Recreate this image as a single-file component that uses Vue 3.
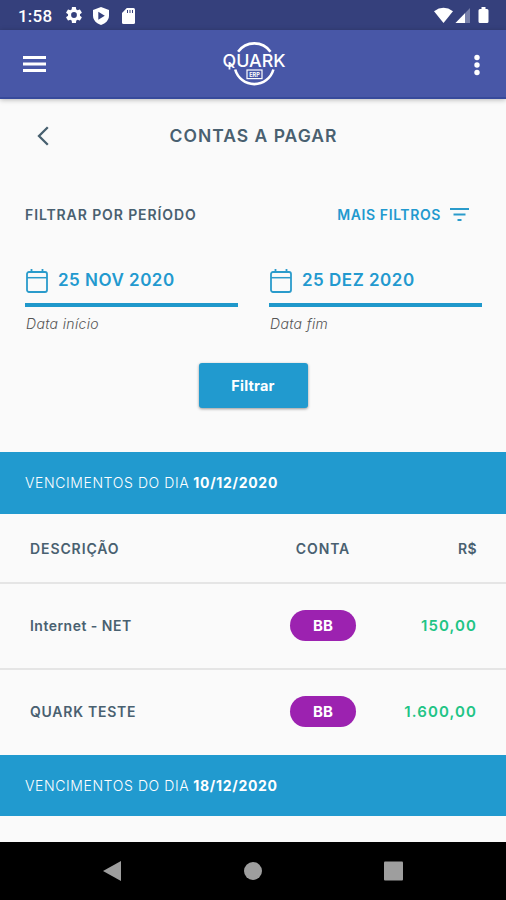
<script setup>
const dates = [
  { value: '25 NOV 2020', hint: 'Data início' },
  { value: '25 DEZ 2020', hint: 'Data fim' },
]
const bills = [
  { name: 'Internet - NET', account: 'BB', amount: '150,00', cls: 'net' },
  { name: 'QUARK TESTE', account: 'BB', amount: '1.600,00', cls: 'quark' },
]
</script>

<template>
  <div class="screen">
    <header class="status">
      <span class="clock">1:58</span>
      <svg class="gear" viewBox="2 2 20 20"><path fill="#fff" fill-rule="evenodd" d="M19.4 13c.1-.3.1-.6.1-1s0-.7-.1-1l2.1-1.6c.2-.2.3-.4.1-.7l-2-3.4c-.1-.2-.4-.3-.6-.2l-2.5 1a7 7 0 0 0-1.7-1l-.4-2.6c0-.3-.2-.5-.5-.5h-4c-.2 0-.4.2-.5.4l-.3 2.7a7 7 0 0 0-1.7 1l-2.5-1c-.2-.1-.5 0-.6.2l-2 3.4c-.2.3-.1.5.1.7L4.600 11a7 7 0 0 0 0 2l-2.200 1.600c-.2.2-.3.4-.1.7l2 3.400c.1.2.4.3.6.2l2.500-1a7 7 0 0 0 1.700 1l.3 2.700c.1.2.3.4.6.4h4c.2 0 .4-.2.5-.4l.3-2.700a7 7 0 0 0 1.700-1l2.500 1c.2.1.5 0 .6-.2l2-3.400c.1-.3.1-.5-.1-.7zM12 15.600a3.600 3.600 0 1 1 0-7.200 3.600 3.600 0 0 1 0 7.200z" /></svg>
      <svg class="shield" viewBox="0 0 16 18"><path fill="#fff" d="M8 0 16 3v5.500c0 4.500-3.300 8-8 9.500-4.700-1.500-8-5-8-9.500V3z" /><path fill="#35407c" d="M5.300 4.800v8l6.500-4z" /></svg>
      <svg class="sd" viewBox="0 0 13 16"><path fill="#fff" d="M4.800 0H11.500Q13 0 13 1.500v13Q13 16 11.500 16h-10Q0 16 0 14.500V5z" /><path stroke="#35407c" stroke-width="1" d="M5.500 2v3M8 2v3M10.500 2v3" /></svg>
      <svg class="signals" viewBox="0 0 56 18">
        <path fill="#fff" d="M0 4.200Q9.500-2.500 19 4.200L9.500 16z" />
        <path fill="#7880aa" d="M36 1v15H21.500z" /><path fill="#fff" d="M31 6.200V16h-9.500z" />
        <path fill="#fff" d="M47.500 0h4v2H53q1.500 0 1.500 1.500v11Q54.500 16 53 16h-7q-1.500 0-1.500-1.500v-11Q44.500 2 46 2h1.500z" />
      </svg>
    </header>

    <nav class="appbar">
      <svg class="menu" viewBox="0 0 23 16"><path stroke="#fff" stroke-width="3" d="M0 1.500h23M0 8h23M0 14.500h23" /></svg>
      <svg class="logo" viewBox="0 0 66 46">
        <g fill="none" stroke="#fff" stroke-width="2.600">
          <path d="M16.100 10.800A19.800 19.800 0 0 1 48.500 10.800" />
          <path d="M13.200 28.500A19.800 19.800 0 0 0 51.400 28.500" />
          <path stroke-width="1.800" d="M7.500 21v7.500" />
          <rect x="25" y="29" width="15" height="8.600" stroke-width="1.200" />
        </g>
        <text x=".5" y="26" class="brand" textLength="63" lengthAdjust="spacingAndGlyphs">QUARK</text>
        <text x="27.200" y="35.600" class="erp" textLength="10.600" lengthAdjust="spacingAndGlyphs">ERP</text>
      </svg>
      <svg class="more" viewBox="0 0 6 22"><g fill="#fff"><circle cx="3" cy="3.500" r="2.700" /><circle cx="3" cy="11" r="2.700" /><circle cx="3" cy="18.500" r="2.700" /></g></svg>
    </nav>

    <main>
      <div class="title">
        <svg viewBox="0 0 12 20"><path fill="none" stroke="#47606f" stroke-width="2.300" d="M10.800 1.200 2 10l8.800 8.800" /></svg>
        <h1>CONTAS A PAGAR</h1>
      </div>
      <div class="filters">
        <span class="period">FILTRAR POR PERÍODO</span>
        <span class="link">MAIS FILTROS</span>
        <svg viewBox="0 0 19 13"><path stroke="#2a9bcb" stroke-width="2" d="M0 1h19M3.500 6.500h12M7.500 12h4" /></svg>
      </div>
      <div class="dates">
        <div v-for="d in dates" :key="d.value" class="date">
          <div class="field">
            <svg viewBox="0 0 22 24"><g fill="none" stroke="#2a9bcb"><rect x="1" y="3" width="20" height="20" rx="2" stroke-width="1.800" /><path stroke-width="1.500" d="M1 8.700h20" /><path stroke-width="1.800" d="M5.500 0v4M16.500 0v4" /></g></svg>
            <span>{{ d.value }}</span>
          </div>
          <em>{{ d.hint }}</em>
        </div>
      </div>
      <button class="submit">Filtrar</button>

      <h2 class="band"><span>VENCIMENTOS DO DIA</span><b>10/12/2020</b></h2>
      <div class="row head">
        <span class="desc">DESCRIÇÃO</span><span class="conta">CONTA</span><span class="money">R$</span>
      </div>
      <div v-for="b in bills" :key="b.name" class="row">
        <span class="name" :class="b.cls">{{ b.name }}</span>
        <span class="chip">{{ b.account }}</span>
        <span class="amount">{{ b.amount }}</span>
      </div>
      <h2 class="band last"><span>VENCIMENTOS DO DIA</span><b>18/12/2020</b></h2>
    </main>

    <footer class="keys">
      <svg viewBox="0 0 18 20"><path fill="#9e9e9e" d="M18 0v20L0 10z" /></svg>
      <svg viewBox="0 0 18 20"><circle cx="9" cy="10" r="9" fill="#9e9e9e" /></svg>
      <svg viewBox="0 0 19 20"><rect y=".5" width="19" height="19" rx="1" fill="#9e9e9e" /></svg>
    </footer>
  </div>
</template>

<style>
body { margin: 0; }
</style>

<style scoped>
* { box-sizing: border-box; }
.screen { width: 506px; height: 900px; display: flex; flex-direction: column; overflow: hidden; background: #fafafa; color: #496070; font-family: Inter, "Liberation Sans", sans-serif; font-weight: 600; white-space: nowrap; }
svg { display: block; flex: none; }
.status { height: 30px; flex: none; display: flex; align-items: center; padding: 0 16px 0 18px; background: #35407c; }
.clock { width: 48px; font: 500 17px/30px Roboto, sans-serif; letter-spacing: .2px; color: #fff; padding-top: 1px; }
.gear { width: 16px; height: 16px; }
.shield { width: 16px; height: 18px; margin-left: 11px; margin-top: 1px; }
.sd { width: 13px; height: 16px; margin-left: 13px; margin-top: 1px; }
.signals { width: 56px; height: 18px; margin-left: auto; margin-top: 2px; }
.appbar { position: relative; z-index: 1; height: 69px; flex: none; display: grid; grid-template-columns: 1fr 66px 1fr; align-items: center; padding: 0 26px 0 23px; background: #4857a7; border-bottom: 2px solid #374a9b; box-shadow: 0 1px 5px #0004; }
.menu { width: 23px; height: 16px; margin-top: 1px; }
.logo { width: 66px; height: 46px; overflow: visible; margin-left: 3px; }
.brand { font: 500 17.500px Inter, sans-serif; fill: #fff; }
.erp { font: 700 6px Inter, sans-serif; fill: #fff; }
.more { width: 6px; height: 22px; margin-top: 2px; justify-self: end; }
main { flex: 1; min-height: 0; display: flex; flex-direction: column; }
.title { height: 73px; flex: none; display: grid; grid-template-columns: 37px 1fr 37px; align-items: center; }
.title svg { width: 12px; height: 20px; margin-left: 37px; }
h1 { margin: 0; padding-left: 1px; text-align: center; font-size: 17.500px; font-weight: 600; letter-spacing: 1px; }
.filters { height: 84px; flex: none; display: flex; align-items: center; padding: 0 37px 0 25px; }
.period { font-size: 14px; letter-spacing: .9px; }
.link { margin-left: auto; font-size: 14px; letter-spacing: .6px; color: #2299cf; }
.filters svg { width: 19px; height: 13px; margin-left: 9px; }
.dates { display: grid; grid-template-columns: 213px 213px; gap: 31px; padding: 0 25px; height: 107px; flex: none; }
.date { display: flex; flex-direction: column; padding-top: 1px; }
.field { height: 50px; display: flex; align-items: center; gap: 10px; padding: 0 0 1px 1px; border-bottom: 4px solid #1f98cb; color: #2299cf; font-size: 17px; letter-spacing: .5px; }
.field svg { width: 22px; height: 24px; margin-top: 2px; }
em { margin-top: 7px; padding-left: 1px; font-size: 14px; line-height: 20px; font-weight: 300; letter-spacing: .35px; color: #555; }
.submit { align-self: center; width: 109px; height: 45px; flex: none; border: 0; border-radius: 3px; background: #219acf; color: #fff; font: 700 14.500px Inter, sans-serif; letter-spacing: .2px; box-shadow: 0 1px 3px #0006; }
.band { flex: none; height: 61px; margin: 0; display: flex; align-items: center; gap: 4px; padding-left: 25px; background: #219acf; color: #fff; font-size: 14px; font-weight: 300; letter-spacing: .6px; }
.submit + .band { margin-top: 44px; height: 62px; padding-bottom: 1px; }
.last { margin-top: 1px; }
.band b { font-weight: 700; letter-spacing: .7px; }
.row { height: 86px; flex: none; display: grid; grid-template-columns: 260px 66px 1fr; align-items: center; padding: 0 29px 1px 30px; font-size: 14px; letter-spacing: .48px; border-top: 2px solid #e5e5e5; }
.head { height: 68px; padding-bottom: 0; border: 0; letter-spacing: .9px; }
.conta { text-align: center; }
.money, .amount { text-align: right; }
.money { letter-spacing: .4px; }
.quark { letter-spacing: .75px; }
.chip { display: grid; place-items: center; height: 31px; border-radius: 16px; background: #9c22b0; color: #fff; font-weight: 700; font-size: 15px; letter-spacing: .2px; }
.amount { color: #21c485; font-weight: 600; font-size: 15px; letter-spacing: 1.100px; }
.keys { height: 58px; flex: none; display: flex; align-items: center; padding-left: 103px; background: #000; }
.keys svg { width: 18px; height: 20px; }
.keys svg + svg { margin-left: 123px; }
.keys svg:last-child { width: 19px; margin-left: 122px; }
</style>
